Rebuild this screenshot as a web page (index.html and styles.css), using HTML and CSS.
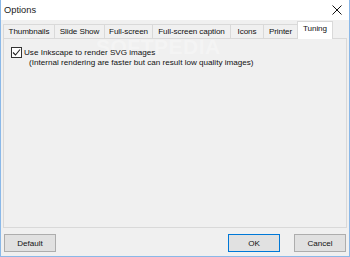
FILE: index.html
```html
<!DOCTYPE html>
<html>
<head>
<meta charset="utf-8">
<link rel="stylesheet" href="styles.css">
</head>
<body>
<div class="window">
  <div class="titlebar">
    <span class="title">Options</span>
    <svg class="close" width="10" height="10" viewBox="0 0 10 10"><path d="M0.5 0.5L9.5 9.5M9.5 0.5L0.5 9.5" stroke="#111" stroke-width="1" fill="none"/></svg>
  </div>
  <div class="client">
    <div class="tabs">
      <div class="tab t1">Thumbnails</div>
      <div class="tab t2">Slide Show</div>
      <div class="tab t3">Full-screen</div>
      <div class="tab t4">Full-screen caption</div>
      <div class="tab t5">Icons</div>
      <div class="tab t6">Printer</div>
      <div class="tab t7 selected">Tuning</div>
    </div>
    <div class="panel">
      <div class="watermark">SOFTPEDIA</div>
      <div class="option">
        <span class="checkbox"><svg width="9" height="9" viewBox="0 0 9 9"><path d="M1 4.5L3.5 7L8 1.5" stroke="#222" stroke-width="1.1" fill="none"/></svg></span>
        <span class="label">Use Inkscape to render SVG images</span>
      </div>
      <div class="note">(Internal rendering are faster but can result low quality images)</div>
    </div>
    <div class="buttons">
      <button class="btn">Default</button>
      <div class="right">
        <button class="btn ok">OK</button>
        <button class="btn">Cancel</button>
      </div>
    </div>
  </div>
</div>
</body>
</html>
```
FILE: styles.css
```css
html, body {
  margin: 0;
  padding: 0;
  background: #f0f0f0;
}
.window {
  width: 350px;
  height: 257px;
  box-sizing: border-box;
  border-left: 1px solid #8ab8e8;
  border-right: 1px solid #8ab8e8;
  border-bottom: 1px solid #8ab8e8;
  display: flex;
  flex-direction: column;
  font-family: "Liberation Sans", Arial, sans-serif;
  font-size: 8.1px;
  color: #111;
  background: #f0f0f0;
}
.titlebar {
  height: 20px;
  background: #fff;
  display: flex;
  align-items: center;
  justify-content: space-between;
  padding: 0 7px 0 3px;
}
.title {
  font-size: 9.3px;
  color: #222;
}
.close {
  display: block;
}
.client {
  flex: 1;
  display: flex;
  flex-direction: column;
  padding: 1px 2px 4px 2px;
}
.tabs {
  display: flex;
  align-items: flex-end;
  height: 17px;
  position: relative;
  z-index: 1;
}
.tab {
  height: 14px;
  box-sizing: border-box;
  border: 1px solid #d9d9d9;
  border-bottom: none;
  border-right: none;
  background: #f0f0f0;
  display: flex;
  align-items: center;
  justify-content: center;
  white-space: nowrap;
  overflow: hidden;
  letter-spacing: -0.1px;
}
.t1 { width: 51px; }
.t2 { width: 50px; }
.t3 { width: 48px; }
.t4 { width: 78px; }
.t5 { width: 33px; }
.t6 { width: 34px; }
.t7 { width: 36px; }
.tab.selected {
  height: 18px;
  margin-bottom: -1px;
  background: #fff;
  border-right: 1px solid #d9d9d9;
  align-items: flex-start;
  padding-top: 2px;
}
.panel {
  flex: 1;
  border: 1px solid #d9d9d9;
  background: #f0f0f0;
  position: relative;
  padding: 8px 0 0 7px;
}
.option {
  position: relative;
  display: flex;
  align-items: center;
  gap: 2px;
}
.checkbox {
  width: 11px;
  height: 11px;
  box-sizing: border-box;
  border: 1px solid #333;
  background: #fff;
  display: flex;
  align-items: center;
  justify-content: center;
}
.checkbox svg { display: block; }
.note {
  margin-left: 18px;
}
.watermark {
  position: absolute;
  left: 92px;
  top: -4px;
  font-size: 21px;
  font-weight: bold;
  letter-spacing: 0.5px;
  color: rgba(255, 255, 255, 0.3);
  pointer-events: none;
}
.buttons {
  display: flex;
  justify-content: space-between;
  margin-top: 6px;
  padding: 0 1px;
}
.right {
  display: flex;
  gap: 14px;
}
.btn {
  width: 52px;
  height: 18px;
  box-sizing: border-box;
  border: 1px solid #adadad;
  background: #e1e1e1;
  font-family: "Liberation Sans", Arial, sans-serif;
  font-size: 8.1px;
  color: #111;
  padding: 0;
  margin: 0;
}
.btn.ok {
  border: 1px solid #0078d7;
}
```
